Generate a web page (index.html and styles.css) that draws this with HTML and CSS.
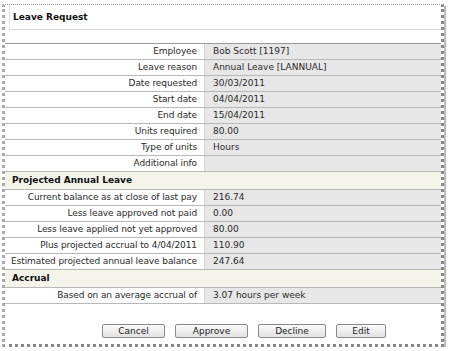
FILE: index.html
```html
<!DOCTYPE html>
<html>
<head>
  <title>Leave Request</title>
  <link rel="stylesheet" href="styles.css">
</head>
<body>
  <div class="frame">
    <div class="title">Leave Request</div>

    <div class="details">
      <div class="row first"><div class="label">Employee</div><div class="value">Bob Scott [1197]</div></div>
      <div class="row"><div class="label">Leave reason</div><div class="value">Annual Leave [LANNUAL]</div></div>
      <div class="row"><div class="label">Date requested</div><div class="value">30/03/2011</div></div>
      <div class="row"><div class="label">Start date</div><div class="value">04/04/2011</div></div>
      <div class="row"><div class="label">End date</div><div class="value">15/04/2011</div></div>
      <div class="row"><div class="label">Units required</div><div class="value">80.00</div></div>
      <div class="row"><div class="label">Type of units</div><div class="value">Hours</div></div>
      <div class="row"><div class="label">Additional info</div><div class="value"></div></div>

      <div class="section">Projected Annual Leave</div>
      <div class="row"><div class="label">Current balance as at close of last pay</div><div class="value">216.74</div></div>
      <div class="row"><div class="label">Less leave approved not paid</div><div class="value">0.00</div></div>
      <div class="row"><div class="label">Less leave applied not yet approved</div><div class="value">80.00</div></div>
      <div class="row"><div class="label">Plus projected accrual to 4/04/2011</div><div class="value">110.90</div></div>
      <div class="row"><div class="label">Estimated projected annual leave balance</div><div class="value">247.64</div></div>

      <div class="section">Accrual</div>
      <div class="row last"><div class="label">Based on an average accrual of</div><div class="value">3.07 hours per week</div></div>
    </div>

    <div class="actions">
      <button type="button" class="btn cancel">Cancel</button>
      <button type="button" class="btn approve">Approve</button>
      <button type="button" class="btn decline">Decline</button>
      <button type="button" class="btn edit">Edit</button>
    </div>
  </div>
</body>
</html>
```

FILE: styles.css
```css
body {
  margin: 0;
  background: #fff;
  font-family: "DejaVu Sans", Verdana, sans-serif;
  font-size: 9px;
  color: #2a2a2a;
}
.frame {
  margin: 4px 0 0 2px;
  width: 436px;
  height: 339px;
  border-top: 1px dotted #999;
  border-left: 3px dotted #aaa;
  border-right: 3px dotted #888;
  border-bottom: 3px dotted #888;
  box-shadow: 2px 2px 1px #bbb;
  overflow: hidden;
}
.title {
  margin-left: 4px;
  height: 24px;
  line-height: 25px;
  padding-left: 3px;
  border-left: 1px solid #e2e2e2;
  border-bottom: 1px solid #d8d8d8;
  font-weight: bold;
  color: #111;
}
.details {
  margin-top: 13px;
  border-bottom: 1px solid #b8b8b8;
}
.row {
  display: flex;
  height: 15px;
  line-height: 15px;
  border-top: 1px solid #b8b8b8;
}
.row.first {
  border-top-color: #999;
}
.label {
  width: 192px;
  flex: none;
  padding-right: 7px;
  text-align: right;
  white-space: nowrap;
  letter-spacing: -0.1px;
}
.value {
  flex: 1;
  padding-left: 8px;
  background: #e7e7e7;
  border-left: 1px solid #d4d4d4;
  white-space: nowrap;
}
.section {
  height: 17px;
  line-height: 17px;
  padding-left: 7px;
  border-top: 1px solid #b8b8b8;
  background: #f4f4ea;
  font-weight: bold;
  color: #111;
}
.actions {
  display: flex;
  gap: 10px;
  margin-top: 20px;
  padding-left: 97px;
}
.btn {
  height: 14px;
  padding: 0;
  font-family: "DejaVu Sans", Verdana, sans-serif;
  font-size: 9px;
  line-height: 12px;
  color: #222;
  border: 1px solid #8a8a8a;
  border-radius: 2px;
  background: linear-gradient(#fbfbfb, #e2e2e2);
}
.cancel { width: 63px; }
.approve { width: 73px; }
.decline { width: 68px; }
.edit { width: 50px; }
```
